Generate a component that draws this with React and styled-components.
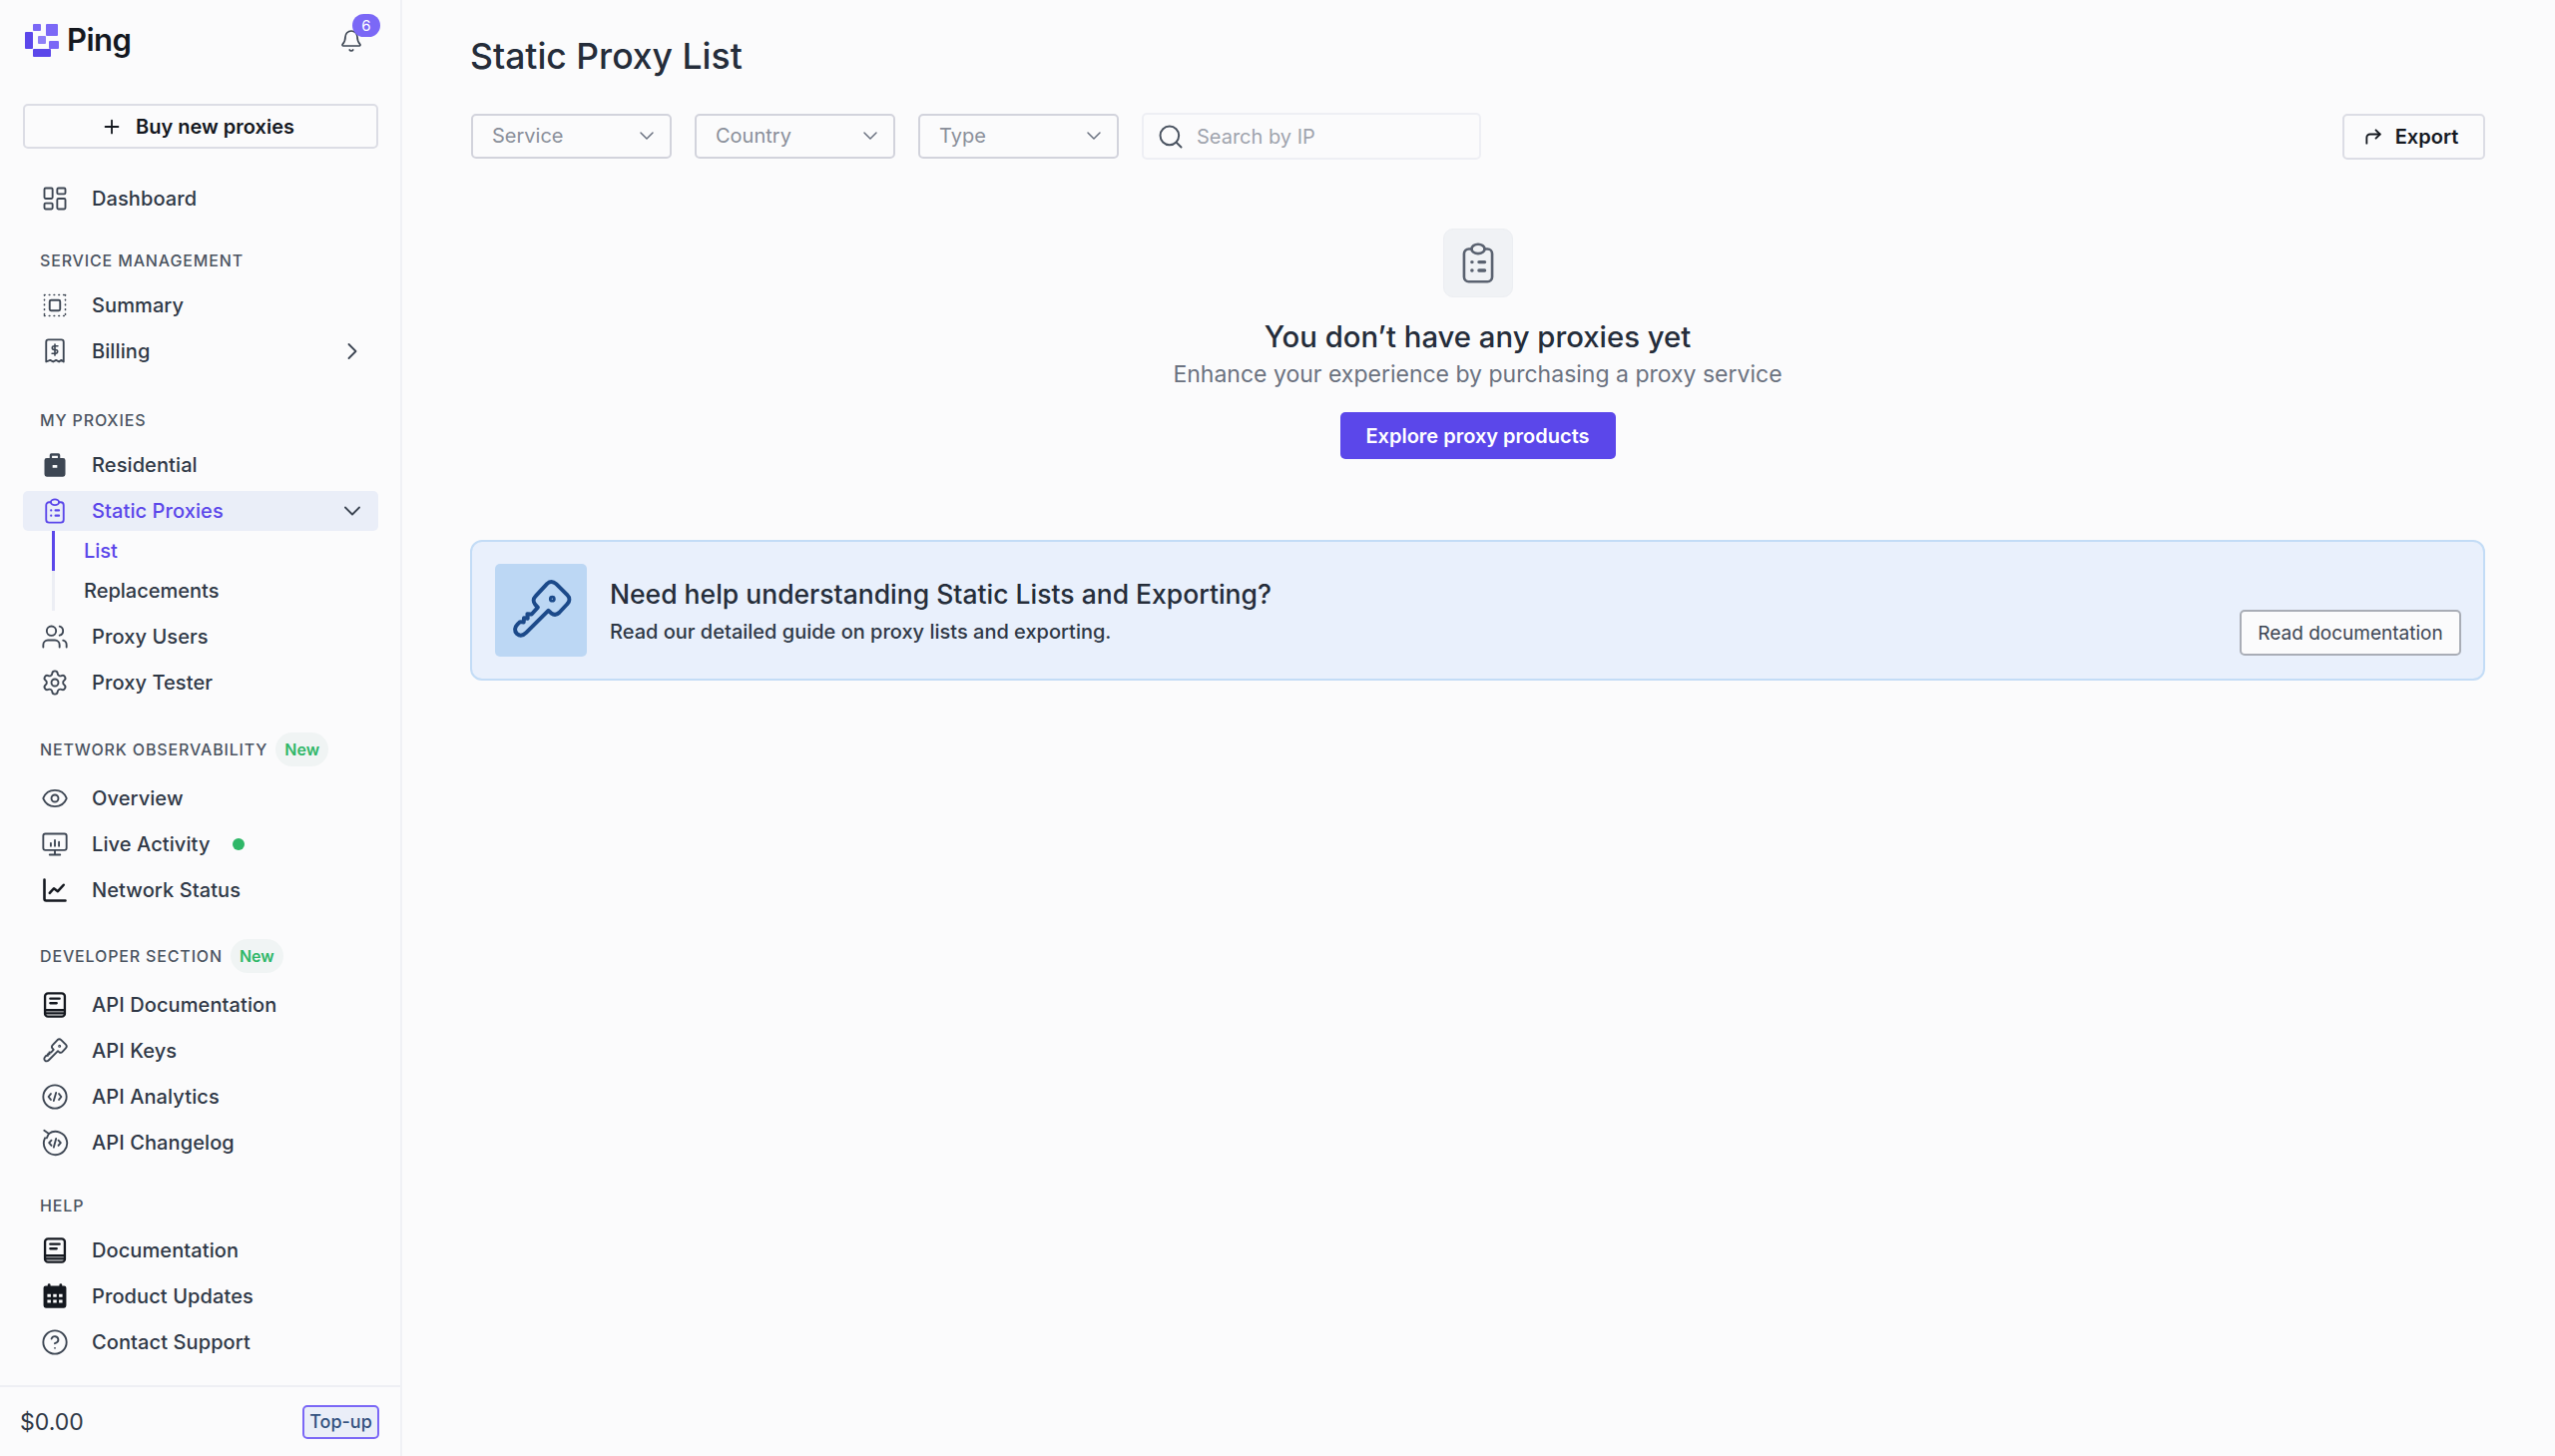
import React from 'react';
import styled, { createGlobalStyle } from 'styled-components';
import { Plus, LayoutDashboard, ChevronRight, ChevronDown, Users, Settings, Eye, CircleHelp, Search, CornerUpRight, Bell } from 'lucide-react';

const GlobalStyle = createGlobalStyle`
    * { box-sizing: border-box; }
    html, body { margin: 0; padding: 0; background: #fbfbfc; }
    body { font-family: Inter, "Noto Sans", sans-serif; color: #2b3441; }
`

const Svg = ({ children, filled, stroke = 1.6 }) => (
    <svg width="100%" height="100%" viewBox="0 0 24 24" fill={filled ? 'currentColor' : 'none'} stroke={filled ? 'none' : 'currentColor'} strokeWidth={stroke} strokeLinecap="round" strokeLinejoin="round">
        {children}
    </svg>
)

const Logo = () => (
    <svg width="34" height="34" viewBox="0 0 34 34">
        <rect x="21" y="0" width="12" height="12" rx="1" fill="#7b68f6" />
        <rect x="8" y="0" width="8" height="7" rx="1" fill="#7b68f6" />
        <rect x="13" y="12" width="8" height="8" rx="1" fill="#8f7ff8" />
        <rect x="24" y="17" width="10" height="8" rx="1" fill="#7b68f6" />
        <rect x="0" y="8" width="8" height="17" rx="1" fill="#5b47ea" />
        <rect x="8" y="25" width="18" height="8" rx="1" fill="#5b47ea" />
    </svg>
)

const SummaryIcon = () => (
    <Svg>
        <rect x="7.5" y="7.5" width="9" height="9" rx="1.2" />
        <path d="M3 3h18M3 21h18M3 3v18M21 3v18" strokeDasharray="0.5 3.6" strokeWidth="1.4" />
    </Svg>
)
const BillingIcon = () => (
    <Svg>
        <path d="M4.5 21V4a2 2 0 0 1 2-2h11a2 2 0 0 1 2 2v17l-2-1.4-2 1.4-2.5-1.4-2.5 1.4-2.5-1.4z" />
        <path d="M14.5 7.5h-3.2a1.5 1.5 0 0 0 0 3.2h1.4a1.5 1.5 0 0 1 0 3.2H9.5M12 6v9.5" strokeWidth="1.4" />
    </Svg>
)
const ResidentialIcon = () => (
    <Svg filled>
        <path d="M9 2h6a1.5 1.5 0 0 1 1.5 1.5V6H19a2 2 0 0 1 2 2v12a2 2 0 0 1-2 2H5a2 2 0 0 1-2-2V8a2 2 0 0 1 2-2h2.5V3.5A1.5 1.5 0 0 1 9 2zm.5 2v2h5V4zM10 12v2.4h4V12z" fillRule="evenodd" />
    </Svg>
)
const ClipboardIcon = ({ stroke }) => (
    <Svg stroke={stroke}>
        <path d="M8.5 4.500H7a2.500 2.500 0 0 0-2.500 2.500v12.500A2.500 2.500 0 0 0 7 22h10a2.500 2.500 0 0 0 2.500-2.500V7A2.500 2.500 0 0 0 17 4.500h-1.500" />
        <ellipse cx="12" cy="4.500" rx="3.500" ry="2.500" />
        <path d="M8.700 11.500h.1M8.700 16h.1M12.500 11.500h3M12.500 16h3" strokeWidth="1.8" />
    </Svg>
)
const MonitorIcon = () => (
    <Svg>
        <rect x="2" y="3" width="20" height="14" rx="1.8" />
        <path d="M12 17v4M7.500 21h9M8.500 11v2.500M12 8.500v5M15.500 10v3.500" />
    </Svg>
)
const ChartIcon = () => (
    <Svg stroke={2.2}>
        <path d="M3 3v16.500a1.500 1.500 0 0 0 1.500 1.500H21" />
        <path d="M7.500 14.500l3.600-4 3.400 2.500 5-5.500" />
    </Svg>
)
const BookIcon = () => (
    <Svg stroke={2}>
        <rect x="3.500" y="2" width="17" height="20" rx="2.600" />
        <path d="M3.500 16.500h17M3.500 19.200h17M8 6.500h8M8 10.500h5.500" />
    </Svg>
)
const KeyIcon = ({ stroke }) => (
    <Svg stroke={stroke}>
        <path d="M14.200 2.600c1-.9 2.200-.8 3.200.1l3.900 3.900c1 1 .9 2.300 0 3.200l-2.800 3c-.9.9-2 .9-2.900.2l-1-.9-7.800 7.800c-1.100 1.100-2.300 1.300-3.300.4-1-1-.8-2.300.2-3.300l.9-.9 1.300.1.100-1.500 1.300.2-.1-1.600 1.500.1 2.200-2.400-.9-1c-.8-.9-.8-2.100.1-3z" />
        <circle cx="16" cy="8" r=".5" />
    </Svg>
)
const CodeCircleIcon = () => (
    <Svg>
        <circle cx="12" cy="12" r="10" />
        <path d="M8.500 9.500L6.500 12l2 2.500M15.500 9.500l2 2.500-2 2.500M13 8.500l-2 7" />
    </Svg>
)
const ChangelogIcon = () => (
    <Svg>
        <path d="M6.800 4.200A10 10 0 1 1 3.500 8" />
        <path d="M2.800 1.500l4 2.700-1.800 3.800" />
        <path d="M9 10l-2 2.200 2 2.300M15 10l2 2.200-2 2.300M13 8.500l-2 7.500" />
    </Svg>
)
const CalendarIcon = () => (
    <Svg filled>
        <path fillRule="evenodd" d="M7 1a1.200 1.200 0 0 1 1.200 1.200V3h7.600v-.8a1.200 1.200 0 0 1 2.400 0V3H20a1.800 1.800 0 0 1 1.800 1.800V20a2 2 0 0 1-2 2H4.200a2 2 0 0 1-2-2V4.800A1.800 1.800 0 0 1 4 3h1.800v-.8A1.200 1.200 0 0 1 7 1zM5.500 10v2.600h3V10zm5 0v2.600h3V10zm5 0v2.600h3V10zm-10 5v2.600h3V15zm5 0v2.600h3V15zm5 0v2.600h3V15z" />
    </Svg>
)

const Page = styled.div`
    display: flex;
    min-height: 100vh;
`
const Sidebar = styled.aside`
    width: 403px;
    flex-shrink: 0;
    height: 1459px;
    display: flex;
    flex-direction: column;
    border-right: 2px solid #f0f1f5;
    padding-top: 24px;
`
const Brand = styled.div`
    display: flex;
    align-items: center;
    height: 34px;
    padding: 0 24px 0 25px;
`
const BrandName = styled.span`
    margin: -4px 0 0 8px;
    font-size: 31px;
    font-weight: 600;
    letter-spacing: -0.5px;
    color: #14181f;
`
const BellWrap = styled.div`
    position: relative;
    margin-left: auto;
    margin-right: 13px;
    width: 24px;
    height: 24px;
    color: #3d4653;
`
const BellBadge = styled.span`
    position: absolute;
    top: -15px;
    left: 13px;
    width: 28px;
    height: 23px;
    border-radius: 12px;
    background: #7b68f6;
    color: #fff;
    font-size: 15px;
    display: flex;
    align-items: center;
    justify-content: center;
`
const BuyButton = styled.button`
    margin: 46px 22px 0 23px;
    height: 45px;
    padding: 0 6px 0 0;
    display: flex;
    align-items: center;
    justify-content: center;
    gap: 13px;
    background: transparent;
    border: 2px solid #dcdde5;
    border-radius: 5px;
    font-family: inherit;
    font-size: 20px;
    font-weight: 600;
    color: #14181f;
`
const Nav = styled.nav`
    margin-top: 30px;
    display: flex;
    flex-direction: column;
`
const Section = styled.div`
    margin-top: ${(p) => p.$top || 0}px;
    display: flex;
    flex-direction: column;
    gap: 6px;
`
const SectionLabel = styled.div`
    height: 34px;
    margin-bottom: ${(p) => p.$after}px;
    padding-left: 40px;
    display: flex;
    align-items: center;
    gap: 8px;
    font-size: 16px;
    font-weight: 500;
    letter-spacing: 0.85px;
    color: #4b5461;
    white-space: nowrap;
`
const NewTag = styled.span`
    height: 34px;
    padding: 0 9px;
    display: flex;
    align-items: center;
    border-radius: 17px;
    background: #f0f4f4;
    color: #2fb768;
    font-size: 16px;
    font-weight: 600;
    letter-spacing: 0;
`
const Row = styled.div`
    height: 40px;
    margin: 0 22px 0 23px;
    padding: 0 12px 0 18px;
    display: flex;
    align-items: center;
    border-radius: 5px;
    font-size: 20px;
    font-weight: 500;
    letter-spacing: 0.1px;
    background: ${(p) => (p.$active ? '#eaeef8' : 'transparent')};
    color: ${(p) => (p.$active ? '#5b47ea' : '#2f3846')};
`
const RowIcon = styled.span`
    width: 28px;
    height: 28px;
    flex-shrink: 0;
    margin-right: 23px;
    display: flex;
    color: ${(p) => (p.$active ? '#5b47ea' : p.$dark ? '#14181f' : '#3d4653')};
`
const RowEnd = styled.span`
    margin-left: auto;
    display: flex;
    color: #3d4653;
`
const LiveDot = styled.span`
    width: 12px;
    height: 12px;
    border-radius: 50%;
    margin-left: 22px;
    background: #2fb768;
`
const SubList = styled.div`
    margin: -6px 0 0 52px;
    display: flex;
    flex-direction: column;
`
const SubItem = styled.div`
    height: 40px;
    padding-left: 29px;
    display: flex;
    align-items: center;
    border-left: 3px solid ${(p) => (p.$active ? '#5b47ea' : '#eceef4')};
    font-size: 20px;
    font-weight: 500;
    color: ${(p) => (p.$active ? '#5b47ea' : '#2f3846')};
`
const Footer = styled.div`
    margin-top: auto;
    height: 71px;
    padding: 0 21px 0 20px;
    display: flex;
    align-items: center;
    justify-content: space-between;
    border-top: 2px solid #eeeff4;
`
const Balance = styled.span`
    font-size: 23px;
    color: #2f3846;
`
const TopUp = styled.button`
    width: 77px;
    height: 34px;
    padding: 0;
    border: 2px solid #7b68f6;
    border-radius: 5px;
    background: #eaeef8;
    font-family: inherit;
    font-size: 18px;
    font-weight: 500;
    color: #33527f;
`
const Main = styled.main`
    flex: 1;
    min-width: 0;
    padding: 0 70px 0 68px;
`
const Title = styled.h1`
    margin: 34px 0 0;
    height: 46px;
    line-height: 46px;
    font-size: 35.5px;
    font-weight: 500;
    color: #252d3a;
`
const Toolbar = styled.div`
    margin-top: 33px;
    padding-left: 1px;
    display: flex;
    align-items: center;
    gap: 23px;
`
const Select = styled.div`
    width: 201px;
    height: 45px;
    padding: 0 11px 2px 19px;
    display: flex;
    align-items: center;
    justify-content: space-between;
    border: 2px solid #d2d3dc;
    border-radius: 5px;
    font-size: 20px;
    color: #8a8f9a;
`
const SearchBox = styled.div`
    width: 340px;
    height: 47px;
    padding: 0 13px;
    display: flex;
    align-items: center;
    gap: 12px;
    border: 2px solid #eeeff4;
    border-radius: 5px;
    font-size: 20px;
    color: #a0a4ae;
`
const SearchGlyph = styled.span`
    display: flex;
    color: #4b5461;
`
const ExportButton = styled.button`
    margin-left: auto;
    width: 143px;
    height: 46px;
    padding: 0 6px 0 0;
    display: flex;
    align-items: center;
    justify-content: center;
    gap: 12px;
    background: transparent;
    border: 2px solid #dcdde5;
    border-radius: 5px;
    font-family: inherit;
    font-size: 20px;
    font-weight: 600;
    color: #14181f;
`
const Empty = styled.section`
    margin-top: 69px;
    display: flex;
    flex-direction: column;
    align-items: center;
`
const EmptyIcon = styled.div`
    width: 70px;
    height: 69px;
    padding: 11px;
    border-radius: 10px;
    background: #f0f2f5;
    border: 1px solid #eceef2;
    color: #5a6270;
`
const EmptyTitle = styled.h2`
    margin: 20px 0 0;
    line-height: 40px;
    font-size: 29.3px;
    font-weight: 500;
    color: #252d3a;
`
const EmptyText = styled.p`
    margin: 0;
    line-height: 34px;
    font-size: 23px;
    color: #6b7280;
`
const PrimaryButton = styled.button`
    margin-top: 21px;
    width: 276px;
    height: 47px;
    border: none;
    border-radius: 5px;
    background: #5b47ea;
    color: #fff;
    font-family: inherit;
    font-size: 20px;
    font-weight: 600;
`
const Banner = styled.section`
    margin-top: 81px;
    height: 141px;
    padding: 22px 22px 22px 23px;
    display: flex;
    border: 2px solid #c3dcf6;
    border-radius: 12px;
    background: #e9f0fc;
`
const BannerIcon = styled.div`
    width: 92px;
    height: 93px;
    padding: 12px;
    flex-shrink: 0;
    border-radius: 5px;
    background: #bcd7f4;
    color: #1c4a8a;
`
const BannerBody = styled.div`
    margin-left: 23px;
    padding-top: 11px;
`
const BannerTitle = styled.h3`
    margin: 0;
    line-height: 38px;
    font-size: 26.5px;
    font-weight: 500;
    color: #252d3a;
`
const BannerText = styled.p`
    margin: 4px 0 0;
    line-height: 30px;
    font-size: 20px;
    font-weight: 500;
    color: #2f3846;
`
const DocButton = styled.button`
    align-self: flex-end;
    margin-left: auto;
    margin-bottom: 1px;
    width: 222px;
    height: 46px;
    background: #fbfbfc;
    border: 2px solid #a9adb6;
    border-radius: 5px;
    font-family: inherit;
    font-size: 19px;
    font-weight: 400;
    color: #3d4653;
`

const nav = [
    {
        top: 25, after: 2, label: 'SERVICE MANAGEMENT', items: [
            { name: 'Summary', icon: <SummaryIcon /> },
            { name: 'Billing', icon: <BillingIcon />, end: <ChevronRight size={28} strokeWidth={1.6} /> },
        ],
    },
    {
        top: 32, after: 2, label: 'MY PROXIES', items: [
            { name: 'Residential', icon: <ResidentialIcon /> },
            { name: 'Static Proxies', icon: <ClipboardIcon />, active: true, end: <ChevronDown size={28} strokeWidth={1.6} />, sub: ['List', 'Replacements'] },
            { name: 'Proxy Users', icon: <Users size={28} strokeWidth={1.6} /> },
            { name: 'Proxy Tester', icon: <Settings size={28} strokeWidth={1.6} /> },
        ],
    },
    {
        top: 30, after: 6, label: 'NETWORK OBSERVABILITY', tag: true, items: [
            { name: 'Overview', icon: <Eye size={28} strokeWidth={1.6} /> },
            { name: 'Live Activity', icon: <MonitorIcon />, live: true },
            { name: 'Network Status', icon: <ChartIcon />, dark: true },
        ],
    },
    {
        top: 29, after: 6, label: 'DEVELOPER SECTION', tag: true, items: [
            { name: 'API Documentation', icon: <BookIcon />, dark: true },
            { name: 'API Keys', icon: <KeyIcon /> },
            { name: 'API Analytics', icon: <CodeCircleIcon /> },
            { name: 'API Changelog', icon: <ChangelogIcon /> },
        ],
    },
    {
        top: 26, after: 2, label: 'HELP', items: [
            { name: 'Documentation', icon: <BookIcon />, dark: true },
            { name: 'Product Updates', icon: <CalendarIcon />, dark: true },
            { name: 'Contact Support', icon: <CircleHelp size={28} strokeWidth={1.6} /> },
        ],
    },
]

const NavRow = ({ item }) => (
    <>
        <Row $active={item.active}>
            <RowIcon $active={item.active} $dark={item.dark}>{item.icon}</RowIcon>
            {item.name}
            {item.live && <LiveDot />}
            {item.end && <RowEnd>{item.end}</RowEnd>}
        </Row>
        {item.sub && (
            <SubList>
                {item.sub.map((s, i) => <SubItem key={s} $active={i === 0}>{s}</SubItem>)}
            </SubList>
        )}
    </>
)

const App = () => {
    return (
        <Page>
            <GlobalStyle />
            <Sidebar>
                <Brand>
                    <Logo />
                    <BrandName>Ping</BrandName>
                    <BellWrap>
                        <Bell size={24} strokeWidth={1.7} />
                        <BellBadge>6</BellBadge>
                    </BellWrap>
                </Brand>
                <BuyButton><Plus size={22} strokeWidth={2} />Buy new proxies</BuyButton>
                <Nav>
                    <Row>
                        <RowIcon><LayoutDashboard size={28} strokeWidth={1.6} /></RowIcon>
                        Dashboard
                    </Row>
                    {nav.map((section) => (
                        <Section key={section.label} $top={section.top}>
                            <SectionLabel $after={section.after}>
                                {section.label}
                                {section.tag && <NewTag>New</NewTag>}
                            </SectionLabel>
                            {section.items.map((item) => <NavRow key={item.name} item={item} />)}
                        </Section>
                    ))}
                </Nav>
                <Footer>
                    <Balance>$0.00</Balance>
                    <TopUp>Top-up</TopUp>
                </Footer>
            </Sidebar>
            <Main>
                <Title>Static Proxy List</Title>
                <Toolbar>
                    {['Service', 'Country', 'Type'].map((name) => (
                        <Select key={name}>{name}<ChevronDown size={24} strokeWidth={1.5} color="#6b7280" /></Select>
                    ))}
                    <SearchBox>
                        <SearchGlyph><Search size={28} strokeWidth={1.7} /></SearchGlyph>
                        Search by IP
                    </SearchBox>
                    <ExportButton><CornerUpRight size={20} strokeWidth={2.2} />Export</ExportButton>
                </Toolbar>
                <Empty>
                    <EmptyIcon><ClipboardIcon stroke={1.4} /></EmptyIcon>
                    <EmptyTitle>You don’t have any proxies yet</EmptyTitle>
                    <EmptyText>Enhance your experience by purchasing a proxy service</EmptyText>
                    <PrimaryButton>Explore proxy products</PrimaryButton>
                </Empty>
                <Banner>
                    <BannerIcon><KeyIcon stroke={1.4} /></BannerIcon>
                    <BannerBody>
                        <BannerTitle>Need help understanding Static Lists and Exporting?</BannerTitle>
                        <BannerText>Read our detailed guide on proxy lists and exporting.</BannerText>
                    </BannerBody>
                    <DocButton>Read documentation</DocButton>
                </Banner>
            </Main>
        </Page>
    )
}

export default App;
